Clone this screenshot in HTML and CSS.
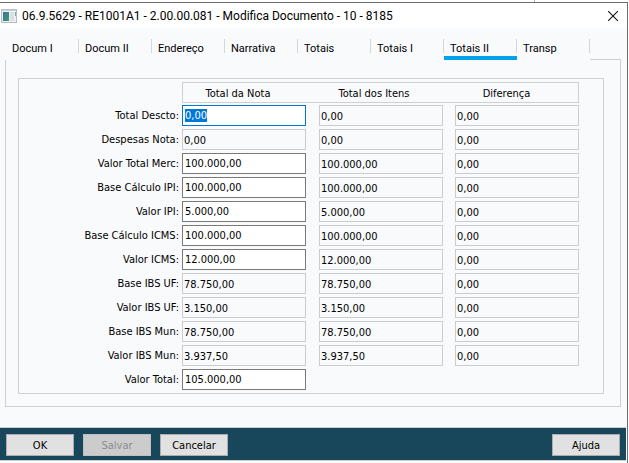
FILE: index.html
```html
<!DOCTYPE html>
<html lang="pt-BR">
<head>
	<meta charset="utf-8">
	<title>Modifica Documento</title>
	<link rel="stylesheet" href="styles.css">
</head>
<body>
	<div class="behind"></div>
	<div class="window">
		<header class="title-bar">
			<svg class="app-icon" width="16" height="14" viewBox="0 0 16 14">
				<defs>
					<linearGradient id="pane" x1="0" y1="0" x2="1" y2="1">
						<stop offset="0" stop-color="#3f6f9e"/>
						<stop offset="1" stop-color="#3d9a72"/>
					</linearGradient>
				</defs>
				<rect x="0.5" y="0.5" width="15" height="13" fill="#eef1f4" stroke="#b4bcc4"/>
				<rect x="1" y="1" width="14" height="1" fill="#c9d1d9"/>
				<rect x="2" y="3" width="6" height="9" fill="url(#pane)"/>
				<rect x="9" y="3" width="4" height="9" fill="#dcdfe2"/>
				<rect x="14" y="3" width="1" height="4" fill="#6fb08e"/>
			</svg>
			<h1>06.9.5629 - RE1001A1 - 2.00.00.081 - Modifica Documento - 10 - 8185</h1>
			<button class="close" type="button" aria-label="Fechar">
				<svg width="10" height="10" viewBox="0 0 10 10">
					<path d="M0 0L10 10M10 0L0 10" stroke="#111" stroke-width="1.1" fill="none"/>
				</svg>
			</button>
		</header>

		<nav class="tabs">
			<button type="button">Docum I</button>
			<button type="button">Docum II</button>
			<button type="button">Endereço</button>
			<button type="button">Narrativa</button>
			<button type="button">Totais</button>
			<button type="button">Totais I</button>
			<button type="button" class="active">Totais II</button>
			<button type="button">Transp</button>
			<span class="tabs-rest"></span>
		</nav>

		<main class="page">
			<div class="group">
				<table>
					<thead>
						<tr>
							<td></td>
							<th id="nota">Total da Nota</th>
							<th id="itens">Total dos Itens</th>
							<th id="dif">Diferença</th>
						</tr>
					</thead>
					<tbody>
						<tr>
							<td><label for="descto">Total Descto:</label></td>
							<td><input type="text" id="descto" value="0,00"></td>
							<td><input type="text" aria-labelledby="itens" value="0,00" readonly></td>
							<td><input type="text" aria-labelledby="dif" value="0,00" readonly></td>
						</tr>
						<tr>
							<td><label for="despesas">Despesas Nota:</label></td>
							<td><input type="text" id="despesas" value="0,00" readonly></td>
							<td><input type="text" aria-labelledby="itens" value="0,00" readonly></td>
							<td><input type="text" aria-labelledby="dif" value="0,00" readonly></td>
						</tr>
						<tr>
							<td><label for="merc">Valor Total Merc:</label></td>
							<td><input type="text" id="merc" value="100.000,00"></td>
							<td><input type="text" aria-labelledby="itens" value="100.000,00" readonly></td>
							<td><input type="text" aria-labelledby="dif" value="0,00" readonly></td>
						</tr>
						<tr>
							<td><label for="base-ipi">Base Cálculo IPI:</label></td>
							<td><input type="text" id="base-ipi" value="100.000,00"></td>
							<td><input type="text" aria-labelledby="itens" value="100.000,00" readonly></td>
							<td><input type="text" aria-labelledby="dif" value="0,00" readonly></td>
						</tr>
						<tr>
							<td><label for="ipi">Valor IPI:</label></td>
							<td><input type="text" id="ipi" value="5.000,00"></td>
							<td><input type="text" aria-labelledby="itens" value="5.000,00" readonly></td>
							<td><input type="text" aria-labelledby="dif" value="0,00" readonly></td>
						</tr>
						<tr>
							<td><label for="base-icms">Base Cálculo ICMS:</label></td>
							<td><input type="text" id="base-icms" value="100.000,00"></td>
							<td><input type="text" aria-labelledby="itens" value="100.000,00" readonly></td>
							<td><input type="text" aria-labelledby="dif" value="0,00" readonly></td>
						</tr>
						<tr>
							<td><label for="icms">Valor ICMS:</label></td>
							<td><input type="text" id="icms" value="12.000,00"></td>
							<td><input type="text" aria-labelledby="itens" value="12.000,00" readonly></td>
							<td><input type="text" aria-labelledby="dif" value="0,00" readonly></td>
						</tr>
						<tr>
							<td><label for="base-uf">Base IBS UF:</label></td>
							<td><input type="text" id="base-uf" value="78.750,00" readonly></td>
							<td><input type="text" aria-labelledby="itens" value="78.750,00" readonly></td>
							<td><input type="text" aria-labelledby="dif" value="0,00" readonly></td>
						</tr>
						<tr>
							<td><label for="valor-uf">Valor IBS UF:</label></td>
							<td><input type="text" id="valor-uf" value="3.150,00" readonly></td>
							<td><input type="text" aria-labelledby="itens" value="3.150,00" readonly></td>
							<td><input type="text" aria-labelledby="dif" value="0,00" readonly></td>
						</tr>
						<tr>
							<td><label for="base-mun">Base IBS Mun:</label></td>
							<td><input type="text" id="base-mun" value="78.750,00" readonly></td>
							<td><input type="text" aria-labelledby="itens" value="78.750,00" readonly></td>
							<td><input type="text" aria-labelledby="dif" value="0,00" readonly></td>
						</tr>
						<tr>
							<td><label for="valor-mun">Valor IBS Mun:</label></td>
							<td><input type="text" id="valor-mun" value="3.937,50" readonly></td>
							<td><input type="text" aria-labelledby="itens" value="3.937,50" readonly></td>
							<td><input type="text" aria-labelledby="dif" value="0,00" readonly></td>
						</tr>
						<tr>
							<td><label for="total">Valor Total:</label></td>
							<td><input type="text" id="total" value="105.000,00"></td>
							<td></td>
							<td></td>
						</tr>
					</tbody>
				</table>
			</div>
		</main>

		<footer class="actions">
			<button type="button">OK</button>
			<button type="button" disabled>Salvar</button>
			<button type="button">Cancelar</button>
			<button type="button" class="help">Ajuda</button>
		</footer>
	</div>

<script>
	// start with the first field selected
	const first = document.querySelector('#descto');
	first.focus();
	first.select();
</script>
</body>
</html>
```
FILE: styles.css
```css
* {
  box-sizing: border-box;
}

body {
  margin: 0;
  background-color: #fff;
  color: #000;
  font-family: "DejaVu Sans Condensed", "DejaVu Sans", sans-serif;
  font-size: 11px;
}

button,
input {
  font: inherit;
  color: inherit;
}

.behind {
  width: 85%;
  height: 2px;
  border-right: 1px solid #b4b4b4;
}

.window {
  min-height: calc(100vh - 2px);
  margin-right: 1px;
  border-top: 1px solid #6e6e6e;
  border-right: 1px solid #6e6e6e;
  background-color: #f9fafc;
}

.title-bar {
  display: flex;
  align-items: center;
  height: 25px;
  padding: 0 9px 0 1px;
  background-color: #fff;
}

.title-bar h1 {
  flex: 1;
  margin: 0 0 0 5px;
  font-family: Roboto, sans-serif;
  font-size: 12px;
  font-weight: normal;
}

.close {
  display: flex;
  padding: 0;
  border: none;
  background: none;
}

/* tabs */
.tabs {
  display: flex;
  height: 32px;
  padding: 11px 6px 0 6px;
}

.tabs button {
  flex: 0 0 73px;
  padding: 2px 0 0 6px;
  border: none;
  border-bottom: 4px solid transparent;
  background: linear-gradient(#d4d6d8, #d4d6d8) right top / 1px 14px no-repeat;
  font-family: Roboto, sans-serif;
  font-size: 11px;
  text-align: left;
}

.tabs button.active {
  border-bottom-color: #00a2e8;
}

.tabs-rest {
  flex: 1;
  border-bottom: 1px solid #d0d0d0;
}

.page {
  margin: 0 6px 0 5px;
  padding: 18px 16px 12px 12px;
  border: 1px solid #d0d0d0;
  border-top: none;
}

.group {
  padding: 3px 24px 2px 0;
  border: 1px solid #d0d0d0;
}

table {
  width: 100%;
  border-spacing: 0;
}

td {
  height: 24px;
  padding: 0;
}

td:first-child {
  padding-right: 3px;
  text-align: right;
}

td:nth-child(2),
th:nth-child(2) {
  width: 137px;
}

td:nth-child(3),
th:nth-child(3) {
  width: 136px;
}

td:nth-child(4),
th:nth-child(4) {
  width: 124px;
}

thead td {
  height: 21px;
}

th {
  padding: 1px 26px 0 0;
  border: solid #d0d0d0;
  border-width: 1px 0;
  font-weight: normal;
}

th:nth-child(2) {
  border-left-width: 1px;
}

th:nth-child(4) {
  padding-right: 20px;
  border-right-width: 1px;
}

input {
  display: block;
  width: 124px;
  height: 21px;
  padding: 0 2px;
  border: 1px solid #7a7a7a;
  background-color: #fff;
}

input:read-only {
  padding: 2px 1px 0;
  border-color: #ccc;
  background-color: #f9fafc;
}

input:focus {
  border-color: #0078d7;
  outline: none;
}

input::selection {
  background-color: #0078d7;
  color: #fff;
}

/* bottom bar */
.actions {
  display: flex;
  gap: 9px;
  margin: 20px 1px 0 0;
  padding: 6px 6px 4px;
  border-top: 1px solid #d0d0d0;
  border-bottom: 1px solid #d0d0d0;
  background-color: #18465a;
}

.actions button {
  width: 68px;
  height: 22px;
  padding: 0;
  border: 1px solid #adadad;
  background-color: #e1e1e1;
}

.actions button:disabled {
  border-color: #bfbfbf;
  background-color: #ccc;
  color: #8c8c8c;
}

.actions .help {
  margin-left: auto;
}
```
